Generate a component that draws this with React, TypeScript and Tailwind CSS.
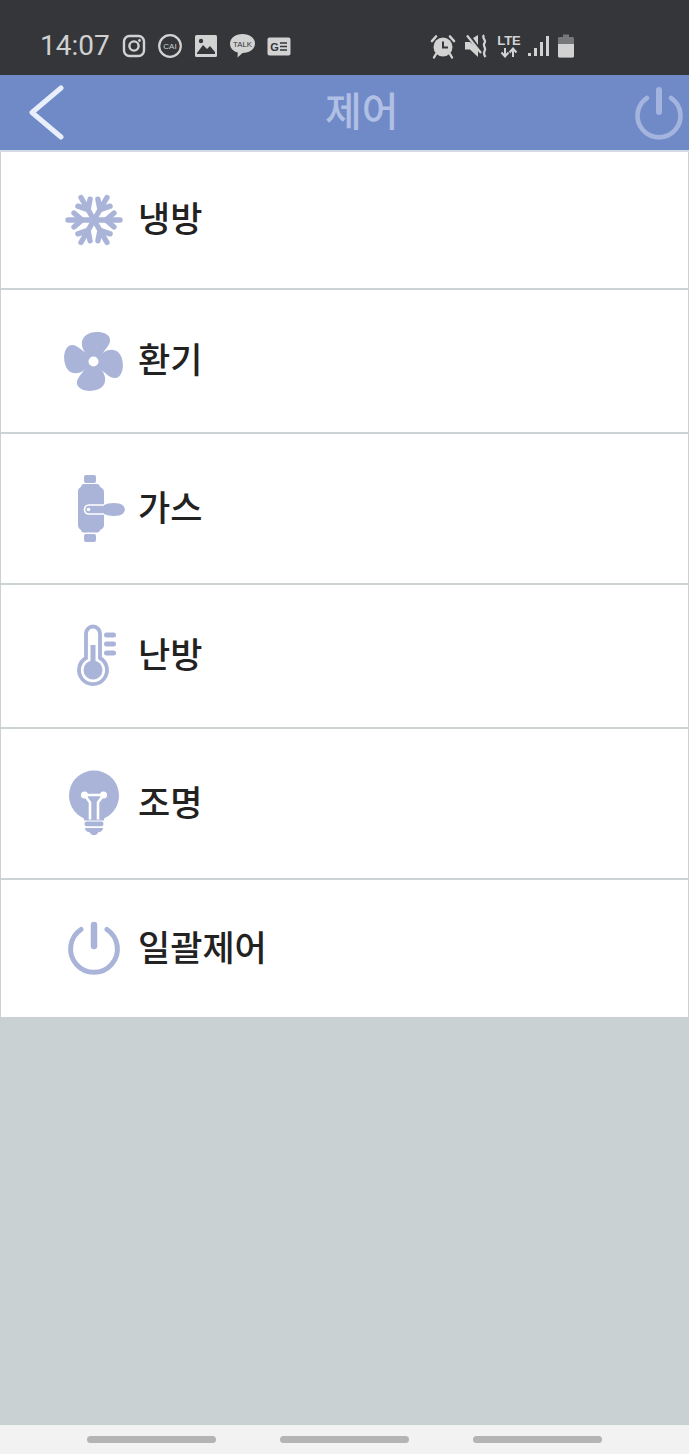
const BLUE = "#a9b4d8";
const STATUS = "#d2d2d2";

function Snowflake() {
  return (
    <svg width="60" height="72" viewBox="0 0 60 72">
      {[0, 60, 120, 180, 240, 300].map((deg) => (
        <g key={deg} transform={`rotate(${deg} 30 36)`} stroke={BLUE} strokeWidth="5.400" strokeLinecap="round" fill="none">
          <path d="M30 36H56" />
          <path d="M42 36L50 29M42 36L50 43" />
        </g>
      ))}
    </svg>
  );
}

function Fan() {
  return (
    <svg width="60" height="72" viewBox="0 0 60 72">
      {[0, 90, 180, 270].map((deg) => (
        <path
          key={deg}
          transform={`translate(29.5 36.5) rotate(${deg})`}
          fill={BLUE}
          d="M-3 -5C-12 -9 -14 -20 -9 -25C-3 -31 12 -31 16 -24C19 -17 10 -12 6 -3Z"
        />
      ))}
      <circle cx="29.500" cy="36.500" r="9" fill={BLUE} />
      <circle cx="29.500" cy="36.500" r="5" fill="#fff" />
    </svg>
  );
}

function GasValve() {
  return (
    <svg width="62" height="72" viewBox="0 0 62 72">
      <rect x="20" y="2" width="12" height="8" rx="2" fill={BLUE} />
      <rect x="20" y="61" width="12" height="8" rx="2" fill={BLUE} />
      <path d="M20 11H33C35 11 36 13 36 14C38 15 40 16 40 19V52C40 55 38 56 36 57C36 58 35 59.500 33 59.500H20C18 59.500 17 58 17 57C15 56 14 54 14 52V19C14 16 15 15 17 14C17 13 18 11 20 11Z" fill={BLUE} />
      <path d="M25 32H40C45 29.500 55 29 59 32.500C61.500 35 61.500 38 59 40.500C55 44 45 43.500 40 41H25C19 41 19 32 25 32Z" fill={BLUE} />
      <path d="M40 32H25C19 32 19 41 25 41H40" fill="none" stroke="#fff" strokeWidth="1.600" />
      <circle cx="24.500" cy="36.500" r="1.800" fill="#fff" />
    </svg>
  );
}

function Thermometer() {
  return (
    <svg width="60" height="72" viewBox="0 0 60 72">
      <path
        d="M22 38V13.500a7 7 0 0 1 14 0V38a14 14 0 1 1-14 0Z"
        fill="none"
        stroke={BLUE}
        strokeWidth="3.800"
      />
      <rect x="26.500" y="25" width="5" height="22" fill={BLUE} />
      <circle cx="29" cy="50" r="9.500" fill={BLUE} />
      <rect x="40" y="12.500" width="12" height="5" rx="2.500" fill={BLUE} />
      <rect x="40" y="21.500" width="12" height="5" rx="2.500" fill={BLUE} />
      <rect x="40" y="30.500" width="12" height="5" rx="2.500" fill={BLUE} />
    </svg>
  );
}

function Bulb() {
  return (
    <svg width="60" height="72" viewBox="0 0 60 72">
      <g transform="translate(0 -1.500)">
        <path d="M30 4a25 25 0 0 1 10 47.900V54H20V51.900A25 25 0 0 1 30 4Z" fill={BLUE} />
        <path d="M20.500 28.500H39.500L34 36V53M20.500 28.500L26 36V53" fill="none" stroke="#fff" strokeWidth="2.600" />
        <circle cx="20.500" cy="28.500" r="3.600" fill="#fff" />
        <circle cx="39.500" cy="28.500" r="3.600" fill="#fff" />
        <rect x="20.500" y="55" width="19" height="4.800" rx="2.200" fill={BLUE} />
        <path d="M21 61.500H39C39 64.500 36 65.500 34 66C33 69.500 27 69.500 26 66C24 65.500 21 64.500 21 61.500Z" fill={BLUE} />
      </g>
    </svg>
  );
}

function PowerIcon() {
  return (
    <svg width="60" height="72" viewBox="0 0 60 72">
      <path d="M17 16.500A23.400 23.400 0 1 0 43 16.500" fill="none" stroke={BLUE} strokeWidth="5" strokeLinecap="round" />
      <path d="M30 12V33" stroke={BLUE} strokeWidth="6.500" strokeLinecap="round" />
    </svg>
  );
}

function Chevron() {
  return (
    <svg width="36" height="56" viewBox="0 0 36 56" className="shrink-0">
      <path d="M32 3L3 27.500L32 52" fill="none" stroke="#e9effa" strokeWidth="5" strokeLinecap="round" strokeLinejoin="round" />
    </svg>
  );
}

function HeaderPower() {
  return (
    <svg width="50" height="56" viewBox="0 0 50 56" className="shrink-0">
      <path d="M13 13A21.500 21.500 0 1 0 37 13" fill="none" stroke="#a3b5de" strokeWidth="4.600" strokeLinecap="round" />
      <path d="M25 5V27" stroke="#a3b5de" strokeWidth="6" strokeLinecap="round" />
    </svg>
  );
}

function StatusIcons() {
  return (
    <div className="ml-[12px] flex items-center">
      <svg width="24" height="24" viewBox="0 0 24 24">
        <rect x="2" y="2" width="20" height="20" rx="5.500" fill="none" stroke={STATUS} strokeWidth="2.400" />
        <circle cx="12" cy="12" r="4.600" fill="none" stroke={STATUS} strokeWidth="2.400" />
        <circle cx="17.500" cy="6.500" r="1.400" fill={STATUS} />
      </svg>
      <svg width="26" height="24" viewBox="0 0 26 24" className="ml-[11px]">
        <circle cx="13" cy="12" r="10.800" fill="none" stroke={STATUS} strokeWidth="2.200" />
        <text x="13" y="15" textAnchor="middle" fontSize="8" fill={STATUS} fontFamily="'Liberation Sans', sans-serif">CAI</text>
      </svg>
      <svg width="24" height="24" viewBox="0 0 24 24" className="ml-[11px]">
        <rect x="1" y="1" width="22" height="22" rx="1.500" fill={STATUS} />
        <circle cx="7" cy="7" r="2.200" fill="#35363a" />
        <path d="M3 19L9 11L13 15L16 12L21 18V20H3Z" fill="#35363a" />
      </svg>
      <svg width="27" height="26" viewBox="0 0 27 26" className="ml-[11px]">
        <path d="M13.500 1C20.500 1 26 5 26 10.500S20.500 20 13.500 20L8.500 24.500L8.800 19.500C4 18.300 1 15 1 10.500C1 5 6.500 1 13.500 1Z" fill={STATUS} />
        <text x="13.500" y="13.500" textAnchor="middle" fontSize="7.800" fill="#35363a" fontFamily="'Liberation Sans', sans-serif">TALK</text>
      </svg>
      <svg width="24" height="19" viewBox="0 0 24 19" className="ml-[11px]">
        <rect x="0.500" y="0.500" width="23" height="18" rx="2" fill={STATUS} />
        <text x="7.500" y="14" textAnchor="middle" fontSize="11" fontWeight="700" fill="#35363a" fontFamily="'Liberation Sans', sans-serif">G</text>
        <path d="M13 6H20M13 9.500H20M13 13H20" stroke="#35363a" strokeWidth="1.700" />
      </svg>
    </div>
  );
}

function SystemIcons() {
  return (
    <div className="ml-auto mr-[115px] flex items-center">
      <svg width="26" height="25" viewBox="0 0 26 25">
        <circle cx="13" cy="13" r="9.500" fill={STATUS} />
        <path d="M13 7.500V13.500H18" fill="none" stroke="#35363a" strokeWidth="2" />
        <path d="M2 7L6 2.500M24 7L20 2.500" stroke={STATUS} strokeWidth="2.600" strokeLinecap="round" />
        <path d="M6 20L4 23.500M20 20L22 23.500" stroke={STATUS} strokeWidth="2.400" strokeLinecap="round" />
      </svg>
      <svg width="25" height="24" viewBox="0 0 25 24" className="ml-[8px]">
        <path d="M1 8H6L14 14.500V23L6 15.500H1Z" fill={STATUS} />
        <path d="M3 1.500L17 19" stroke={STATUS} strokeWidth="2.200" />
        <path d="M9 4L14 1V11Z" fill={STATUS} />
        <path d="M20 1C17 4 23 6 20.500 9C18 12 23 14 20.500 17C19.500 19 20 21 21.500 23" fill="none" stroke={STATUS} strokeWidth="2.200" />
      </svg>
      <div className="ml-[8px] flex w-[24px] flex-col items-center">
        <span className="font-['Liberation_Sans',sans-serif] text-[13px] font-bold leading-[13px] text-[#d2d2d2]">LTE</span>
        <svg width="20" height="11" viewBox="0 0 20 11">
          <path d="M6 1V9M2.500 5.500L6 9.500L9.500 5.500" fill="none" stroke={STATUS} strokeWidth="2" />
          <path d="M14 10V2M10.500 5.500L14 1.500L17.500 5.500" fill="none" stroke={STATUS} strokeWidth="2" />
        </svg>
      </div>
      <svg width="21" height="22" viewBox="0 0 21 22" className="ml-[7px]">
        <rect x="0" y="18" width="3" height="3" fill={STATUS} />
        <rect x="6" y="13" width="3" height="8" fill={STATUS} />
        <rect x="12" y="7" width="3" height="14" fill={STATUS} />
        <rect x="18" y="1" width="3" height="20" fill={STATUS} />
      </svg>
      <svg width="16" height="24" viewBox="0 0 16 24" className="ml-[9px]">
        <path d="M5 0.500H11V3H14.500C15.300 3 16 3.700 16 4.500V22C16 22.800 15.300 23.500 14.500 23.500H1.500C0.700 23.500 0 22.800 0 22V4.500C0 3.700 0.700 3 1.500 3H5Z" fill="#77787a" />
        <path d="M0 10H16V22C16 22.800 15.300 23.500 14.500 23.500H1.500C0.700 23.500 0 22.800 0 22Z" fill={STATUS} />
      </svg>
    </div>
  );
}

const ROWS = [
  { label: "냉방", icon: <Snowflake />, height: "h-[138px]" },
  { label: "환기", icon: <Fan />, height: "h-[144px]" },
  { label: "가스", icon: <GasValve />, height: "h-[151px]" },
  { label: "난방", icon: <Thermometer />, height: "h-[144px]" },
  { label: "조명", icon: <Bulb />, height: "h-[151px]" },
];

export default function App() {
  return (
    <div className="flex h-[1454px] w-[689px] flex-col overflow-hidden bg-[#c9d1d3] font-['Noto_Sans_CJK_KR','Noto_Sans',sans-serif]">
      <div className="flex h-[75px] shrink-0 items-center bg-[#35363a] pl-[40px] pt-[17px]">
        <span className="font-['Roboto',sans-serif] text-[28px] leading-none text-[#d0d0d0]">14:07</span>
        <StatusIcons />
        <SystemIcons />
      </div>

      <div className="flex h-[75px] shrink-0 items-center bg-[#6f8ac7] pl-[29px] pr-[5px]">
        <Chevron />
        <span className="mb-[7px] ml-[260px] text-[40px] font-medium leading-none text-[#b0bfe3]">제어</span>
        <div className="ml-auto">
          <HeaderPower />
        </div>
      </div>

      <div className="flex flex-col border-t-2 border-[#d5dbe6] px-[1px]">
        {ROWS.map((row) => (
          <div key={row.label} className={`flex ${row.height} items-center border-b-2 border-[#cdd2d4] bg-white pl-[63px]`}>
            <div className="w-[74px] shrink-0">{row.icon}</div>
            <span className="mb-[7px] text-[35px] font-medium leading-none text-[#222222]">{row.label}</span>
          </div>
        ))}
        <div className="flex h-[137px] items-center bg-white pl-[63px]">
          <div className="w-[74px] shrink-0">
            <PowerIcon />
          </div>
          <span className="mb-[7px] text-[35px] font-medium leading-none text-[#222222]">일괄제어</span>
        </div>
      </div>

      <div className="mt-auto flex h-[29px] shrink-0 items-center justify-between bg-[#f2f2f2] pl-[87px] pr-[87px]">
        <div className="h-[7px] w-[129px] rounded-full bg-[#b4b4b4]" />
        <div className="h-[7px] w-[129px] rounded-full bg-[#b4b4b4]" />
        <div className="h-[7px] w-[129px] rounded-full bg-[#b4b4b4]" />
      </div>
    </div>
  );
}
